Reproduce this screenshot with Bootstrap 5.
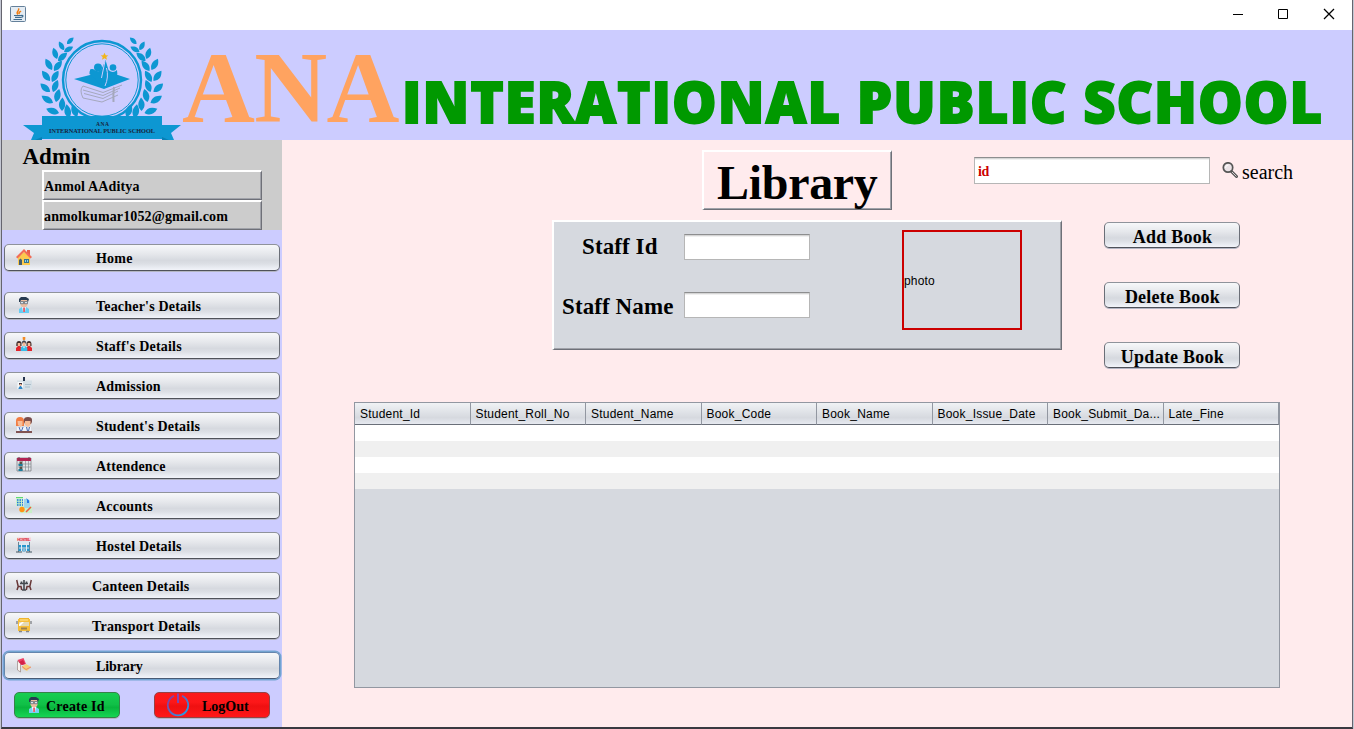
<!DOCTYPE html>
<html lang="en">
<head>
<meta charset="utf-8">
<title>ANA International Public School - Library</title>
<meta name="viewport" content="width=device-width, initial-scale=1">
<link href="https://cdn.jsdelivr.net/npm/bootstrap@5.3.0/dist/css/bootstrap.min.css" rel="stylesheet">
<style>
:root{--nim:#d6d9df;--lav:#ccf;--pink:#ffebed}
body{width:1354px;height:729px;overflow:hidden;background:#c4c7d3;font-family:"Liberation Serif","Times New Roman",serif;color:#000;line-height:1}
svg{display:block;flex:none}
.app-window{width:1352px;height:729px;margin-left:1px;border:solid #65656f;border-width:0 1px 2px;border-bottom-color:#393940;background:var(--pink)}
.title-strip{height:30px;padding-left:8px;background:#fff}
.banner{height:110px;background:var(--lav)}
.brand-a{font-size:101px;font-weight:700;color:#ffa360;line-height:110px;letter-spacing:-.7px;margin:3px 0 0;width:222px}
.brand-b{font-family:"Open Sans",sans-serif;font-size:56px;font-weight:800;color:#090;-webkit-text-stroke:1.8px #090;line-height:60px;margin:41px 0 0 -2px;letter-spacing:1.120px;white-space:nowrap}
.side{width:280px;height:587px;background:var(--lav)}
.admin-box{height:90px;background:#ccc;padding:5px 20px 0 20.5px}
.admin-box h2{font-size:23px;font-weight:700;line-height:25px;margin:0;position:relative;top:-1px}
.bevel{border:solid;border-width:2px 1px 1px 2px;border-color:#fff #6e7078 #6e7078 #fff;box-shadow:inset -1px -1px #a0a2a9}
.bevel-row{height:30px;margin-left:19.5px;width:220px;font-size:14px;font-weight:700;line-height:29px;letter-spacing:.14px}
.jbtn{display:flex;flex-shrink:0;align-items:center;border:1px solid;border-color:#8f939b #6b6f78 #4f525a;border-radius:5px;background:linear-gradient(#f7f8fa,#e6e8ec 35%,#d6d9df 62%,#dcdfe5 75%,#f2f4fa);padding:0;height:26px;color:#000;font-weight:700;line-height:1;box-shadow:0 1px #b4b6c4}
.menu-b{width:276px;height:27px;padding:3px 0 0 11px;font-size:14px;letter-spacing:.2px;gap:64px}
.menu-b.near{gap:60px}
.menu-b svg{margin-top:-4px}
.menu-b.focused{border-color:#6485ad #6485ad #485a74;box-shadow:0 0 0 1.5px #73a4d1}
.main{width:1070px}
.page-name{width:190px;height:60px;font-size:48px;font-weight:700;line-height:61px;margin:0;letter-spacing:-.3px;padding-left:13px}
.jinput{border:1px solid #b6b6b6;border-top:1px solid #8d8e8f;border-radius:0;box-shadow:inset 0 1px #d5d5d5,inset 0 2px #f0f0f0;height:26px;background:#fff;padding:0 3px}
.find-input{width:236px;height:27px;font:700 14px "Liberation Serif",serif;letter-spacing:-.3px;padding-top:2px;color:#c00}
.jpanel{width:510px;height:130px;background:var(--nim);margin-left:270px}
.flabel{font-size:23px;font-weight:700;width:122px;line-height:26px;letter-spacing:.1px;white-space:nowrap}
.photo-box{width:120px;height:100px;border:2px solid #c00;font:12px "Liberation Sans",sans-serif;letter-spacing:.15px;padding-top:2px}
.act-b{width:136px;font-size:18px;justify-content:center;letter-spacing:.25px;padding:3px 0 0 1px}
.grid-box{width:926px;height:286px;margin:52px 0 0 72px;border:1px solid #9297a1;background:var(--nim)}
.grid-box table{width:924px;table-layout:fixed;border-collapse:separate;border-spacing:0}
.grid-box th{font:12px/20px "Liberation Sans",sans-serif;letter-spacing:.22px;height:22px;padding:1px 0 0 5px;border-right:1px solid #9297a1;border-bottom:1px solid #6a6f79;background:linear-gradient(#f0f2f5,#dfe2e7 45%,#d6d9df 70%,#e6e9f0);white-space:nowrap}
.grid-box td{height:16px;padding:0;background:#fff}
.grid-box tr:nth-child(even) td{background:#f0f0f0}
</style>
</head>
<body>
<div class="app-window">
  <header class="title-strip d-flex align-items-center">
    <svg width="16" height="16" viewBox="0 0 16 16" style="margin-top:-2px"><rect x=".5" y=".5" width="15" height="15" rx="1" fill="#e4ecf3" stroke="#64809a"/><path d="M8 8.500C5 6 10 5 8.500 2.300M9.600 8C8 6.700 10 6 11 5" fill="none" stroke="#f07e14" stroke-width="1.500"/><path d="M4 9.500h7.500M5 11.300h5.500M3.500 13.500h8.500M11 9.500c3-.8 2.500 2-.5 2" fill="none" stroke="#3f6c8e" stroke-width="1.200"/></svg>
    <svg class="ms-auto" style="margin:-2px 15px 0 0" width="104" height="14" viewBox="0 0 104 14" fill="none" stroke="#000"><path d="M0 7.500h10M45.500 2.500h9v9h-9z"/><path d="M91 2l10 10M101 2l-10 10" stroke-width="1.300"/></svg>
  </header>
  <section class="banner d-flex">
    <svg width="180" height="110" viewBox="2 30 180 110">
      <defs><path id="leaf" d="M0 0C-5-2-6-6-4-11C1-8 2-4 0 0Z"/>
      <g id="laurel" fill="#0d97d2">
      <use href="#leaf" transform="translate(63 44) rotate(65) scale(.8)"/><use href="#leaf" transform="translate(60 50) rotate(-10) scale(.85)"/><use href="#leaf" transform="translate(60 52) rotate(80) scale(.9)"/>
      <use href="#leaf" transform="translate(53 59) rotate(2)"/><use href="#leaf" transform="translate(54 61) rotate(68) scale(1.050)"/>
      <use href="#leaf" transform="translate(48 70) rotate(-10) scale(1.100)"/><use href="#leaf" transform="translate(50 71) rotate(58) scale(1.100)"/>
      <use href="#leaf" transform="translate(46 81) rotate(-18) scale(1.100)"/><use href="#leaf" transform="translate(48 82) rotate(50) scale(1.100)"/>
      <use href="#leaf" transform="translate(46 92) rotate(-28) scale(1.100)"/><use href="#leaf" transform="translate(49 92) rotate(42) scale(1.100)"/>
      <use href="#leaf" transform="translate(49 103) rotate(-38) scale(1.150)"/><use href="#leaf" transform="translate(52 102) rotate(34) scale(1.150)"/>
      <use href="#leaf" transform="translate(55 113) rotate(-52) scale(1.150)"/><use href="#leaf" transform="translate(58 111) rotate(22) scale(1.150)"/>
      <use href="#leaf" transform="translate(63 120) rotate(-66) scale(1.100)"/><use href="#leaf" transform="translate(65 118) rotate(10) scale(1.200)"/>
      <use href="#leaf" transform="translate(73 124) rotate(-78)"/><use href="#leaf" transform="translate(73 117) rotate(0) scale(1.150)"/></g></defs>
      <use href="#laurel" transform="translate(4 0)"/><use href="#laurel" transform="translate(199.500 0) scale(-1 1)"/>
      <circle cx="102" cy="80" r="39" fill="none" stroke="#0d97d2" stroke-width="2.400"/><circle cx="102" cy="80" r="36.200" fill="none" stroke="#0d97d2"/>
      <path d="M74 79L92 74.500C88 69 91 68 94 71Q98 78 105 84Q112 79 115 74L130 79L104 89Z" fill="#0d97d2"/>
      <circle cx="98" cy="67.500" r="4" fill="#0d97d2"/><circle cx="113" cy="67.500" r="3.300" fill="#0d97d2"/>
      <path d="M101 86Q94 77 89.500 74Q89 69 93 69Q98 73 101 70Q104 64 105.500 60Q107 65 108.500 70Q113 74 117 70Q119 77 110 84Z" fill="#0d97d2"/>
      <path d="M105 61L101.500 78M106.500 68Q109 77 105 86" stroke="#ccf" fill="none"/>
      <path d="M104.500 52.800l1.200 2.400 2.600.2-2 1.700.7 2.600-2.500-1.500-2.500 1.500.7-2.600-2-1.700 2.600-.2z" fill="#f1b51c"/>
      <g fill="none" stroke="#a5a8bd" stroke-width="1"><path d="M83 86Q79 90 83 98L102 102L118 95M83 86L103 92.500L122 85M83 90L103 95.500L120 88M84 93.500L103 98.500L118 91"/><path d="M114 87Q113 94 113.500 102" stroke-width="2"/></g>
      <path d="M23 125H42V116H162V125H181L171 133L174 140H31L34 133Z" fill="#0d97d2"/><path d="M42 137V140H35ZM162 137V140H169Z" fill="#087fb5"/><path d="M42 139.500H162" stroke="#ccf"/>
      <g font-family="Liberation Serif,serif" font-weight="700" fill="#19233b"><text x="96" y="126" font-size="5.500" textLength="13">ANA</text><text x="49" y="133" font-size="6" textLength="106" lengthAdjust="spacingAndGlyphs">INTERNATIONAL PUBLIC SCHOOL</text></g>
    </svg>
    <div class="brand-a">ANA</div>
    <h1 class="brand-b">INTERATIONAL PUBLIC SCHOOL</h1>
  </section>
  <div class="d-flex">
    <aside class="side">
      <div class="admin-box">
        <h2>Admin</h2>
        <div class="bevel bevel-row">Anmol AAditya</div>
        <div class="bevel bevel-row">anmolkumar1052@gmail.com</div>
      </div>
      <nav class="d-flex flex-column px-0" style="padding-top:14px;margin-left:2px">
        <button class="jbtn menu-b" style="margin-bottom:21px"><svg width="16" height="16" viewBox="0 0 16 16"><path d="M11 1h3v6h-3z" fill="#e6604c"/><path d="M2 8l6-5 6 5v8H2z" fill="#fbc94e"/><path d="M0 8L8 0l8 8-1.500 1.500L8 3 1.500 9.500z" fill="#f26d56"/><path d="M3 16v-5l1.500-1.500L6 11v5z" fill="#455c6c"/><path d="M8 10h5v4H8z" fill="#38738d"/><path d="M9 11h1v2H9zm2 0h1v2h-1z" fill="#88d2ea"/></svg>Home</button>
        <div class="d-flex flex-column" style="gap:13px">
        <button class="jbtn menu-b"><svg width="16" height="16" viewBox="0 0 16 16"><path d="M4.500 3h7v5l-2 3h-3l-2-3z" fill="#e9bda1"/><path d="M3 5V2l2-2h5l3 2-1 3-1-2H5L4 5z" fill="#273b50"/><path d="M4.500 4.500h3v2.200h-3zm4 0h3v2.200h-3z" fill="#d8e5ed" stroke="#405362" stroke-width=".6"/><path d="M3 16v-4l3-2h4l3 2v4z" fill="#66cdf4"/><path d="M6 10h4l-1 5H7z" fill="#e8f4fb"/><path d="M7.300 10.500h1.500v4.500H7.300z" fill="#e93845"/></svg>Teacher's Details</button>
        <button class="jbtn menu-b"><svg width="16" height="16" viewBox="0 0 16 16"><path d="M6.700 0h2.600v2.500L8 3.500l-1.300-1z" fill="#f28b25"/><path d="M.3 9V7Q.5 4 3 4t2.500 3v2zm10.200 0V7Q10.700 4 13 4t2.500 3v2z" fill="#46302e"/><path d="M5.500 6.500Q6 3.500 8 3.500t2.500 3z" fill="#424550"/><path d="M1.700 6h2.600v3.500H1.700zm5-.5h2.600v4H6.700zm5 .5h2.600v3.500h-2.600z" fill="#f5b998"/><path d="M0 14v-3l2-2h2l2 2v3zm10 0v-3l2-2h2l2 2v3z" fill="#e3252d"/><path d="M4.700 14v-3L7 9h2l2.300 2v3z" fill="#35bdea"/><path d="M7 9.500h2l-1 2z" fill="#fff"/></svg>Staff's Details</button>
        <button class="jbtn menu-b"><svg width="16" height="16" viewBox="0 0 16 16"><path d="M1 3.500h15v9H1z" fill="#d5dfe6"/><path d="M1.500 5h5.500v7H1.500z" fill="#f8fafb"/><path d="M7 0h2v4H7z" fill="#26344d"/><path d="M3 6h3v2H3z" fill="#433942"/><path d="M3.500 7h2v2h-2z" fill="#f5bc9b"/><path d="M2.500 12v-1L4 9h1l1.500 2v1z" fill="#2d85c6"/><path d="M9 7.500h6M9 10h5" stroke="#adc0cc"/></svg>Admission</button>
        <button class="jbtn menu-b"><svg width="16" height="16" viewBox="0 0 16 16"><path d="M0 4Q0 0 4 0t4 4v5H0z" fill="#f17d43"/><path d="M8 5Q7 0 12 0t4 5l-1 2H9z" fill="#794d4b"/><path d="M1.500 4h5v4L4.500 10 2 8zm7.500 0h5.500v4L12 10 9 8z" fill="#f8bd98"/><path d="M1 10h3l1 2 1-2h2v4H1zm7 0h3l1 2 1-2h2v4H8z" fill="#eef2fb"/><path d="M3 10l1.500 4h1L7 10M10.500 10l1 4h1l1-4" fill="none" stroke="#486bb1"/><path d="M0 14h16v2H0z" fill="#805352"/></svg>Student's Details</button>
        <button class="jbtn menu-b"><svg width="16" height="16" viewBox="0 0 16 16"><path d="M1 1h14v13H1z" fill="#dfe3e7" stroke="#75777c" stroke-width=".7"/><path d="M1 1h14v3H1z" fill="#b32353"/><path d="M3 0v3M13 0v3" stroke="#783850"/><path d="M6.500 4v10M9.500 4v10M12.500 4v10M2 7h13M2 10h13" stroke="#888d93" stroke-width=".7"/><path d="M3.500 4.500h2.500v3H3.500zm0 5h2.500v3H3.500z" fill="#5a5245"/><path d="M2.500 7h4v2h-4zm0 5h4v2h-4z" fill="#1a7e9e"/></svg>Attendence</button>
        <button class="jbtn menu-b"><svg width="16" height="16" viewBox="0 0 16 16"><path d="M0 0h7v9H0zm4 9h12v7H4z" fill="#c8f0c9"/><path d="M8 2h4l2 2v7H8z" fill="#9ed5eb"/><path d="M10 1l3 2.500V6h-2V3z" fill="#2376e8"/><path d="M0 .5h7" stroke="#62d970"/><path d="M1 3h6M1 5.500h6M1 8h6" stroke="#1a73db" stroke-width="1.500" stroke-dasharray="1.500 1"/><circle cx="6" cy="12.500" r="2.700" fill="#ff9415"/><path d="M10 15l5-5" stroke="#ed5c40" stroke-width="1.500"/></svg>Accounts</button>
        <button class="jbtn menu-b"><svg width="16" height="16" viewBox="0 0 16 16"><path d="M2 4h12v10H2z" fill="#dbe5ed"/><path d="M1 .5h14v3.500H1z" fill="#f9d5d8"/><text x="1.200" y="3.800" font-family="Liberation Sans,sans-serif" font-size="4" font-weight="700" fill="#d82e43" textLength="13.500">HOSTEL</text><path d="M2.500 5v10M13.500 5v10" stroke="#51697a" stroke-width=".8"/><path d="M2.500 8h11v2.500h-11zm0 3.500h11v2.500h-11z" fill="#2797ce"/><path d="M5.500 7v7M10.500 7v7" stroke="#e5edf3"/><path d="M6.500 10h3v5h-3z" fill="#8cbcd6"/><path d="M0 15h6m4 0h6" stroke="#445962"/></svg>Hostel Details</button>
        <button class="jbtn menu-b near"><svg width="16" height="16" viewBox="0 0 16 16" fill="none"><path d="M.7 3l1.500 6.500H5l.7 3.500M2.200 9.500L1 13M15.300 3l-1.500 6.500H11l-.7 3.500M13.800 9.500L15 13" stroke="#673737" stroke-width="1.500"/><path d="M4 6.500h8M8 6.500V13M6 13h4M5.500 4.500v2M8 3v3M10.500 4.500v2" stroke="#454a50" stroke-width="1.600"/></svg>Canteen Details</button>
        <button class="jbtn menu-b near"><svg width="16" height="16" viewBox="0 0 16 16"><path d="M3 1h10v14h-2v-1H5v1H3z" fill="#eeb42f"/><path d="M2 2h12v12H2z" fill="#f6be39"/><path d="M4 3h8" stroke="#ffe599"/><path d="M3 5h10v4H3z" fill="#e3d9b5"/><path d="M3 7l3-2h2L4 9H3z" fill="#fff"/><path d="M5 10.500h6v2H5z" fill="#9c8150"/><path d="M1 4v3M15 4v3M3 14.500h3m4 0h3" stroke="#84878c" stroke-width="1.400"/></svg>Transport Details</button>
        <button class="jbtn menu-b focused"><svg width="16" height="16" viewBox="0 0 16 16"><path d="M1.500 4v9l3 2V6z" fill="#f8f4ef" stroke="#8a7670" stroke-width=".6"/><path d="M1.500 3l6-2 2.500 6-5 1z" fill="#ec4266"/><path d="M3 5l4-2 2 4-3 1z" fill="#d32347"/><path d="M6 9.500l4-2.500 5 3-4 4-4-2z" fill="#f6d178"/><path d="M6 9.500l4 3 5-2.500" fill="none" stroke="#ed8a6c"/></svg><span style="letter-spacing:-.1px">Library</span></button>
        </div>
        <div class="d-flex" style="margin:13px 0 0 10px;gap:34px">
          <button class="jbtn" style="width:106px;font-size:14px;letter-spacing:.2px;padding:3px 0 0 11px;gap:4px;background:linear-gradient(#17ce51,#10c047 48%,#08b53d 60%,#16d554);border-color:#368148"><svg width="16" height="16" viewBox="0 0 16 16" style="margin-top:-4px"><path d="M4.500 3h7v5l-2 3h-3l-2-3z" fill="#e9bda1"/><path d="M3 5V2l2-2h5l3 2-1 3-1-2H5L4 5z" fill="#273b50"/><path d="M4.500 4.500h3v2.200h-3zm4 0h3v2.200h-3z" fill="#d8e5ed" stroke="#405362" stroke-width=".6"/><path d="M3 16v-4l3-2h4l3 2v4z" fill="#75d1f4"/><path d="M6 10h4l-1 5H7z" fill="#fff"/><path d="M7.300 10.500h1.500v4.500H7.300z" fill="#e93845"/></svg>Create Id</button>
          <button class="jbtn" style="width:116px;font-size:14px;padding:0 0 0 11px;gap:12px;background:linear-gradient(#fb191b,#fd1719 38%,#ef1011 55%,#ff1719);border-color:#964044"><svg width="24" height="24" viewBox="0 0 24 24"><defs><linearGradient id="pw" x2="1" y2="1"><stop stop-color="#953099"/><stop offset="1" stop-color="#17a9ee"/></linearGradient></defs><path d="M8 2.800A10.200 10.200 0 1 0 16 2.800" stroke="url(#pw)" stroke-width="1.800" fill="none"/><path d="M12 .5v9.500" stroke="#8244b0" stroke-width="2"/></svg><span style="padding-top:3px">LogOut</span></button>
        </div>
      </nav>
    </aside>
    <main class="main">
      <div class="d-flex" style="height:80px;padding:10px 0 0 420px">
        <h2 class="page-name bevel">Library</h2>
        <input class="form-control jinput find-input" style="margin:7px 0 0 82px" value="id" aria-label="Book id">
        <div class="d-flex" style="margin:11px 0 0 12px;font-size:20px;gap:4px;line-height:22px"><svg width="16" height="16" viewBox="0 0 16 16" style="margin-top:1px"><circle cx="6" cy="5.500" r="4.700" fill="#ebe3e7" stroke="#555" stroke-width="1.700"/><path d="M3.500 6q0-3 3-3" fill="none" stroke="#fff"/><path d="M9.500 9.500l5 5" stroke="#555" stroke-width="3" stroke-linecap="round"/><path d="M10 10l4.500 4.500" stroke="#d2cdd0"/></svg>search</div>
      </div>
      <div class="d-flex" style="height:130px">
        <div class="bevel jpanel d-flex">
          <div style="width:348px;padding:12px 0 0 8px">
            <div class="d-flex" style="height:58px"><label class="flabel" style="padding-left:20px">Staff Id</label><input class="jinput" style="width:126px" aria-label="Staff Id"></div>
            <div class="d-flex"><label class="flabel" style="margin-top:2px">Staff Name</label><input class="jinput" style="width:126px" aria-label="Staff Name"></div>
          </div>
          <div class="photo-box d-flex align-items-center" style="margin-top:8px">photo</div>
        </div>
        <div class="d-flex flex-column" style="gap:34px;margin:2px 0 0 42px"><button class="jbtn act-b">Add Book</button><button class="jbtn act-b">Delete Book</button><button class="jbtn act-b">Update Book</button></div>
      </div>
      <div class="grid-box">
        <table>
          <thead><tr><th>Student_Id</th><th>Student_Roll_No</th><th>Student_Name</th><th>Book_Code</th><th>Book_Name</th><th>Book_Issue_Date</th><th>Book_Submit_Da...</th><th>Late_Fine</th></tr></thead>
          <tbody><tr><td colspan="8"></td></tr><tr><td colspan="8"></td></tr><tr><td colspan="8"></td></tr><tr><td colspan="8"></td></tr></tbody>
        </table>
      </div>
    </main>
  </div>
</div>
<script src="https://cdn.jsdelivr.net/npm/bootstrap@5.3.0/dist/js/bootstrap.bundle.min.js"></script>
</body>
</html>
